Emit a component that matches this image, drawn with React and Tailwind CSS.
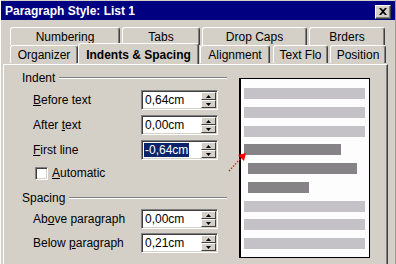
import React from 'react';

const font = { fontFamily: '"Liberation Sans", Arial, sans-serif' };

const Tab = ({ label, w, ml = 0, selected = false }) => (
  <div
    className={`relative flex items-center justify-center rounded-t-[3px] border-l border-t border-r border-l-white border-t-white border-r-[#404040] bg-[#d4d0c8] shadow-[inset_-1px_0_0_#808080] ${
      selected ? 'z-10 -mt-[2px] h-[21px] font-bold text-[12px]' : 'h-[18px] text-[12px]'
    }`}
    style={{ width: w, marginLeft: ml }}
  >
    <span className={selected ? 'mt-[1px]' : ''}>{label}</span>
  </div>
);

const Spin = () => (
  <div className="flex flex-col gap-0">
    {['up', 'down'].map((d) => (
      <div
        key={d}
        className="flex h-[8px] w-[15px] items-center justify-center border-l border-t border-b border-r border-l-white border-t-white border-b-[#404040] border-r-[#404040] bg-[#d4d0c8]"
      >
        <svg width="5" height="3" viewBox="0 0 5 3">
          {d === 'up' ? <path d="M2.5 0 L5 3 L0 3 Z" fill="#000" /> : <path d="M0 0 L5 0 L2.5 3 Z" fill="#000" />}
        </svg>
      </div>
    ))}
  </div>
);

const Field = ({ value, selected = false }) => (
  <div className="flex h-[20px] w-[77px] items-center justify-between border-t border-l border-b border-r border-t-[#808080] border-l-[#808080] border-b-white border-r-white bg-white pl-[2px] pr-[1px] shadow-[inset_1px_1px_0_#404040,inset_-1px_-1px_0_#d4d0c8]">
    {selected ? (
      <span className="bg-[#0a246a] px-[1px] leading-[14px] text-white">{value}</span>
    ) : (
      <span className="pl-[1px] leading-[14px]">{value}</span>
    )}
    <Spin />
  </div>
);

const Row = ({ label, value, selected, mt }) => (
  <div className="flex h-[20px] items-center" style={{ marginTop: mt }}>
    <div className="w-[119px] pl-[11px]">{label}</div>
    <Field value={value} selected={selected} />
  </div>
);

const Header = ({ label, mt = 0 }) => (
  <div className="flex h-[12px] items-center" style={{ marginTop: mt }}>
    <span>{label}</span>
    <div className="ml-[4px] h-[2px] flex-1 border-t border-b border-t-[#808080] border-b-white" />
  </div>
);

const Bar = ({ dark, w = 121, ml = 0 }) => (
  <div
    className={`h-[11px] shrink-0 ${dark ? 'bg-[#858385]' : 'bg-[#c4c2c6]'}`}
    style={{ width: w, marginLeft: ml }}
  />
);

export default function App() {
  return (
    <div
      className="relative h-[264px] w-[396px] overflow-hidden border-l border-r border-l-white border-r-[#a09c94] bg-[#d4d0c8] text-[12px] text-black"
      style={font}
    >
      {/* title bar */}
      <div className="mt-[1px] flex h-[19px] items-center justify-between bg-[#000080] pl-[4px] pr-[4px]">
        <span className="text-[12px] font-bold text-white">Paragraph Style: List 1</span>
        <div className="mt-[2px] flex h-[14px] w-[16px] items-center justify-center border-l border-t border-r border-b border-l-white border-t-white border-r-[#404040] border-b-[#404040] bg-[#d4d0c8] shadow-[inset_-1px_-1px_0_#808080]">
          <svg width="8" height="7" viewBox="0 0 8 7">
            <path d="M0 0 L2 0 L4 2 L6 0 L8 0 L5 3.5 L8 7 L6 7 L4 5 L2 7 L0 7 L3 3.5 Z" fill="#000" />
          </svg>
        </div>
      </div>

      {/* tabs row 1 */}
      <div className="mt-[7px] flex pl-[9px]">
        <Tab label="Numbering" w={110} />
        <Tab label="Tabs" w={78} ml={2} />
        <Tab label="Drop Caps" w={105} ml={2} />
        <Tab label="Brders" w={76} ml={2} />
      </div>

      {/* tabs row 2 */}
      <div className="flex pl-[9px]">
        <Tab label="Organizer" w={68} />
        <Tab label="Indents & Spacing" w={121} selected />
        <Tab label="Alignment" w={70} ml={1} />
        <Tab label="Text Flo" w={55} ml={3} />
        <Tab label="Position" w={56} ml={2} />
      </div>

      {/* panel */}
      <div className="ml-[2px] flex h-[210px] w-[385px] border-l border-t border-r border-l-white border-t-white border-r-[#404040] shadow-[inset_-1px_0_0_#808080]">
        <div className="ml-[18px] flex w-[205px] flex-col pt-[7px]">
          <Header label="Indent" />
          <Row label={<><u>B</u>efore text</>} value="0,64cm" mt={6} />
          <Row label={<>After <u>t</u>ext</>} value="0,00cm" mt={5} />
          <Row label={<><u>F</u>irst line</>} value="-0,64cm" selected mt={5} />
          <div className="mt-[7px] flex h-[13px] items-center pl-[13px] leading-[13px]">
            <div className="h-[13px] w-[13px] border-t border-l border-b border-r border-t-[#808080] border-l-[#808080] border-b-white border-r-white bg-white shadow-[inset_1px_1px_0_#404040,inset_-1px_-1px_0_#d4d0c8]" />
            <span className="ml-[4px]"><u>A</u>utomatic</span>
          </div>
          <Header label="Spacing" mt={12} />
          <Row label={<>Ab<u>o</u>ve paragraph</>} value="0,00cm" mt={5} />
          <Row label={<>Below <u>p</u>aragraph</>} value="0,21cm" mt={4} />
        </div>

        {/* preview */}
        <div className="ml-[12px] mt-[13px] flex h-[180px] w-[131px] flex-col gap-[7.75px] border border-l-2 border-black bg-[#fcfdfc] pl-[3px] pr-[4px] pt-[9px]">
          <Bar />
          <Bar />
          <Bar />
          <Bar dark w={97} />
          <Bar dark w={109} ml={4} />
          <Bar dark w={61} ml={4} />
          <Bar />
          <Bar />
          <Bar />
        </div>
      </div>

      {/* red arrow */}
      <svg className="absolute left-[224px] top-[150px]" width="24" height="24" viewBox="0 0 24 24">
        <line x1="4" y1="21" x2="16" y2="8" stroke="#ff0000" strokeWidth="1.2" strokeDasharray="1.5 1.5" />
        <path d="M21 3 L13 5 L19 11 Z" fill="#ff0000" />
      </svg>
    </div>
  );
}
